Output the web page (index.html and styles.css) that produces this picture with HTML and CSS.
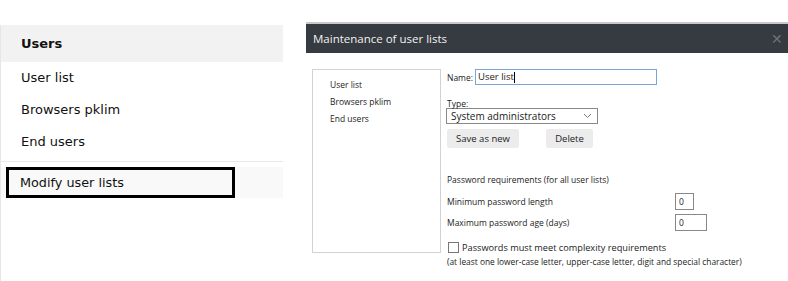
FILE: index.html
```html
<!DOCTYPE html>
<html>
<head>
    <title>Maintenance of user lists</title>
    <meta charset="UTF-8">
    <link rel="stylesheet" href="styles.css">
</head>
<body>
    <div class="page">
        <div class="sidebar">
            <div class="side-head">Users</div>
            <div class="side-item">User list</div>
            <div class="side-item">Browsers pklim</div>
            <div class="side-item">End users</div>
            <div class="side-sep"></div>
            <div class="side-action">
                <div class="action-box">Modify user lists</div>
            </div>
        </div>

        <div class="dialog">
            <div class="dialog-head">
                <span class="dialog-title">Maintenance of user lists</span>
                <span class="dialog-close">&#x2715;</span>
            </div>
            <div class="dialog-body">
                <div class="list-box">
                    <div class="list-item">User list</div>
                    <div class="list-item">Browsers pklim</div>
                    <div class="list-item">End users</div>
                </div>
                <div class="form">
                    <div class="name-row">
                        <label for="listName">Name:</label>
                        <div class="name-input" id="listName">User list<span class="caret"></span></div>
                    </div>
                    <div class="type-label">Type:</div>
                    <div class="select">
                        <span>System administrators</span>
                        <svg width="9" height="6" viewBox="0 0 9 6"><path d="M1 1 L4.5 4.5 L8 1" fill="none" stroke="#777" stroke-width="1"/></svg>
                    </div>
                    <div class="buttons">
                        <button class="btn-save">Save as new</button>
                        <button class="btn-delete">Delete</button>
                    </div>
                    <div class="pw-title">Password requirements (for all user lists)</div>
                    <div class="pw-row">
                        <span class="pw-label">Minimum password length</span>
                        <div class="num-input short">0</div>
                    </div>
                    <div class="pw-row">
                        <span class="pw-label">Maximum password age (days)</span>
                        <div class="num-input long">0</div>
                    </div>
                    <div class="check-row">
                        <span class="checkbox"></span>
                        <span>Passwords must meet complexity requirements</span>
                    </div>
                    <div class="note">(at least one lower-case letter, upper-case letter, digit and special character)</div>
                </div>
            </div>
        </div>
    </div>
</body>
</html>
```

FILE: styles.css
```css
body {
    margin: 0;
    background: #fff;
    font-family: "DejaVu Sans", Verdana, sans-serif;
    color: #111;
}
.page {
    display: flex;
    width: 788px;
    height: 281px;
    overflow: hidden;
}
.sidebar {
    width: 282px;
    margin-top: 25px;
    border-left: 1px solid #e6e6e6;
    flex-shrink: 0;
}
.side-head {
    height: 37px;
    line-height: 37px;
    background: #f2f2f2;
    padding-left: 20px;
    font-size: 13px;
    font-weight: bold;
}
.side-item {
    height: 32px;
    line-height: 32px;
    padding-left: 20px;
    font-size: 13px;
}
.side-sep {
    margin-top: 3px;
    border-top: 1px solid #e8e8e8;
}
.side-action {
    margin-top: 5px;
    height: 31px;
    background: #f9f9f9;
}
.action-box {
    width: 212px;
    height: 25px;
    margin-left: 5px;
    border: 3px solid #000;
    line-height: 25px;
    padding-left: 11px;
    font-size: 12.8px;
    box-sizing: content-box;
}
.dialog {
    margin-left: 23px;
    margin-top: 22px;
    flex: 1;
    font-family: "Open Sans", sans-serif;
}
.dialog-head {
    height: 29px;
    border-top: 2px solid #c9c9c9;
    background: #363a41;
    display: flex;
    align-items: center;
    justify-content: space-between;
    padding: 0 5px 0 7px;
}
.dialog-title {
    color: #f2f2f2;
    font-size: 11.5px;
}
.dialog-close {
    color: #6d7178;
    font-size: 14px;
}
.dialog-body {
    display: flex;
    padding: 16px 0 0 6px;
}
.list-box {
    width: 127px;
    height: 173px;
    border: 1px solid #d2d2d2;
    padding-top: 9px;
    box-sizing: content-box;
}
.list-item {
    font-size: 8.5px;
    color: #222;
    padding-left: 17px;
    height: 17px;
    line-height: 12px;
}
.form {
    margin-left: 6px;
    font-size: 8.5px;
    color: #222;
}
.name-row {
    display: flex;
    align-items: center;
    height: 16px;
}
.name-row label {
    margin-right: 2px;
}
.name-input {
    width: 178px;
    height: 14px;
    border: 1px solid #7aa6d6;
    padding-left: 2px;
    line-height: 14px;
    font-size: 9.5px;
}
.caret {
    display: inline-block;
    width: 1px;
    height: 11px;
    background: #000;
    vertical-align: middle;
}
.type-label {
    margin-top: 13px;
    height: 10px;
    line-height: 11px;
}
.select {
    width: 141px;
    height: 14px;
    border: 1px solid #888;
    display: flex;
    align-items: center;
    justify-content: space-between;
    padding: 0 5px 0 4px;
    font-size: 10px;
    box-sizing: content-box;
    margin-left: -1px;
}
.buttons {
    display: flex;
    margin-top: 5px;
}
.buttons button {
    font-family: "Open Sans", sans-serif;
    font-size: 9.5px;
    height: 19px;
    border: none;
    border-radius: 2px;
    background: #ececec;
    color: #222;
    padding: 0;
}
.btn-save {
    width: 72px;
}
.btn-delete {
    width: 47px;
    margin-left: 27px;
}
.pw-title {
    margin-top: 26px;
    height: 17px;
}
.pw-row {
    display: flex;
    align-items: center;
    height: 21px;
}
.pw-label {
    width: 228px;
}
.num-input {
    height: 15px;
    border: 1px solid #888;
    padding-left: 3px;
    line-height: 15px;
    font-size: 8.5px;
}
.short {
    width: 14px;
}
.long {
    width: 27px;
}
.check-row {
    display: flex;
    align-items: center;
    margin-top: 7px;
    font-size: 9.2px;
    height: 14px;
}
.checkbox {
    width: 9px;
    height: 9px;
    border: 1px solid #777;
    margin: 0 3px 0 1px;
}
.note {
    margin-top: 2px;
    font-size: 8.4px;
}
```
